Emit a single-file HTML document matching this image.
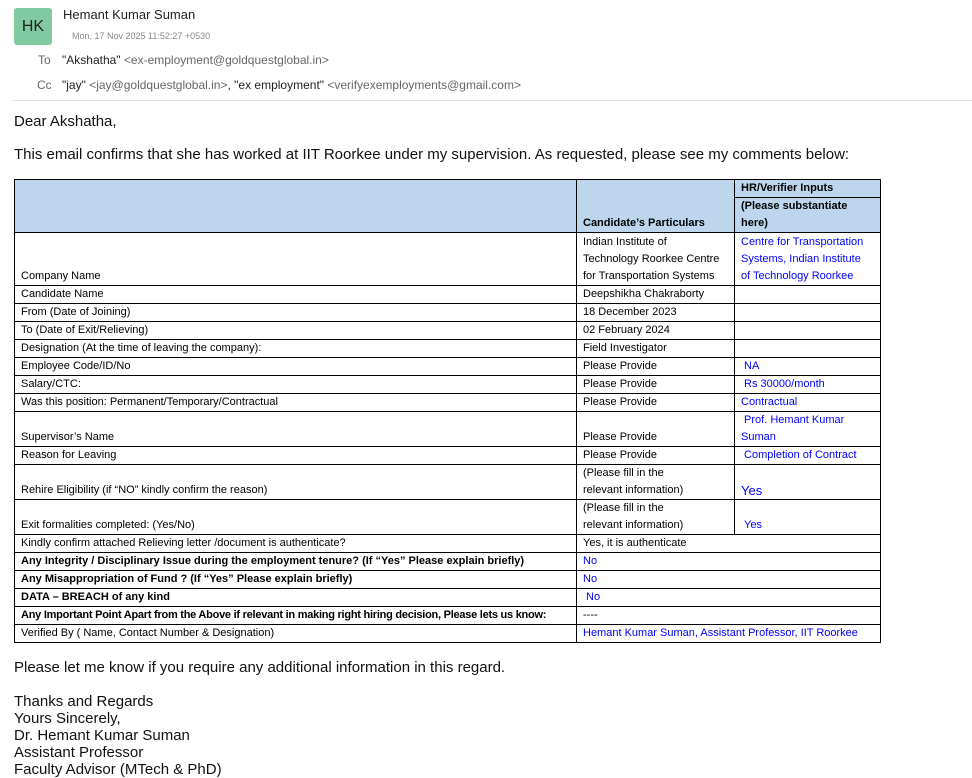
<!DOCTYPE html>
<html><head><meta charset="utf-8"><style>
body{margin:0;width:972px;height:777px;overflow:hidden;background:#fff;font-family:"Liberation Sans",sans-serif;color:#222;position:relative}
.a{position:absolute;white-space:nowrap}
.av{position:absolute;left:14px;top:8px;width:38px;height:37px;background:#80c9a1;border-radius:3px;font-size:16px;color:#222;text-align:center;line-height:37px}
table{position:absolute;left:14px;top:179px;width:866px;border-collapse:collapse;table-layout:fixed;font-size:11px;color:#000}
td{border:1px solid #000;padding:0 6px;vertical-align:bottom;line-height:17px;white-space:nowrap;overflow:hidden}
.h{background:#bdd6ee;font-weight:bold}
.b{color:#00f}
.bo{font-weight:bold}
.p{font-size:15px;color:#111}
</style></head><body>
<div class="av">HK</div>
<div class="a" style="left:63px;top:7px;font-size:13px;color:#222">Hemant Kumar Suman</div>
<div class="a" style="left:72px;top:31px;font-size:9px;color:#888">Mon, 17 Nov 2025 11:52:27 +0530</div>
<div class="a" style="left:38px;top:53px;font-size:12px;color:#666">To</div>
<div class="a" style="left:62px;top:53px;font-size:12px;color:#222">"Akshatha" <span style="color:#666">&lt;ex-employment@goldquestglobal.in&gt;</span></div>
<div class="a" style="left:37px;top:78px;font-size:12px;color:#666">Cc</div>
<div class="a" style="left:62px;top:78px;font-size:12px;color:#222">"jay" <span style="color:#666">&lt;jay@goldquestglobal.in&gt;</span>, "ex employment" <span style="color:#666">&lt;verifyexemployments@gmail.com&gt;</span></div>
<div class="a" style="left:13px;top:100px;width:959px;height:1px;background:#e4e4e4"></div>
<div class="a p" style="left:14px;top:113px">Dear Akshatha,</div>
<div class="a p" style="left:14px;top:146px">This email confirms that she has worked at IIT Roorkee under my supervision. As requested, please see my comments below:</div>
<table>
<colgroup><col style="width:562px"><col style="width:158px"><col style="width:146px"></colgroup>
<tr style="height:18px"><td class="h" rowspan="2"></td><td class="h" rowspan="2">Candidate’s Particulars</td><td class="h">HR/Verifier Inputs</td></tr>
<tr style="height:35px"><td class="h">(Please substantiate<br>here)</td></tr>
<tr style="height:53px"><td>Company Name</td><td>Indian Institute of<br>Technology Roorkee Centre<br>for Transportation Systems</td><td class="b">Centre for Transportation<br>Systems, Indian Institute<br>of Technology Roorkee</td></tr>
<tr style="height:18px"><td>Candidate Name</td><td>Deepshikha Chakraborty</td><td></td></tr>
<tr style="height:18px"><td>From (Date of Joining)</td><td>18 December 2023</td><td></td></tr>
<tr style="height:18px"><td>To (Date of Exit/Relieving)</td><td>02 February 2024</td><td></td></tr>
<tr style="height:18px"><td>Designation (At the time of leaving the company):</td><td>Field Investigator</td><td></td></tr>
<tr style="height:18px"><td>Employee Code/ID/No</td><td>Please Provide</td><td class="b">&nbsp;NA</td></tr>
<tr style="height:18px"><td>Salary/CTC:</td><td>Please Provide</td><td class="b">&nbsp;Rs 30000/month</td></tr>
<tr style="height:18px"><td>Was this position: Permanent/Temporary/Contractual</td><td>Please Provide</td><td class="b">Contractual</td></tr>
<tr style="height:35px"><td>Supervisor’s Name</td><td>Please Provide</td><td class="b">&nbsp;Prof. Hemant Kumar<br>Suman</td></tr>
<tr style="height:18px"><td>Reason for Leaving</td><td>Please Provide</td><td class="b">&nbsp;Completion of Contract</td></tr>
<tr style="height:35px"><td>Rehire Eligibility (if “NO” kindly confirm the reason)</td><td>(Please fill in the<br>relevant information)</td><td class="b" style="font-size:13px">Yes</td></tr>
<tr style="height:35px"><td>Exit formalities completed: (Yes/No)</td><td>(Please fill in the<br>relevant information)</td><td class="b">&nbsp;Yes</td></tr>
<tr style="height:18px"><td>Kindly confirm attached Relieving letter /document is authenticate?</td><td colspan="2">Yes, it is authenticate</td></tr>
<tr style="height:18px"><td class="bo">Any Integrity / Disciplinary Issue during the employment tenure? (If “Yes” Please explain briefly)</td><td colspan="2" class="b">No</td></tr>
<tr style="height:18px"><td class="bo">Any Misappropriation of Fund ? (If “Yes” Please explain briefly)</td><td colspan="2" class="b">No</td></tr>
<tr style="height:18px"><td class="bo">DATA – BREACH of any kind</td><td colspan="2" class="b">&nbsp;No</td></tr>
<tr style="height:18px"><td class="bo" style="letter-spacing:-0.25px">Any Important Point Apart from the Above if relevant in making right hiring decision, Please lets us know:</td><td colspan="2">----</td></tr>
<tr style="height:18px"><td>Verified By ( Name, Contact Number &amp; Designation)</td><td colspan="2" class="b">Hemant Kumar Suman, Assistant Professor, IIT Roorkee</td></tr>
</table>
<div class="a p" style="left:14px;top:659px">Please let me know if you require any additional information in this regard.</div>
<div class="a p" style="left:14px;top:693px;line-height:17px">Thanks and Regards<br>Yours Sincerely,<br>Dr. Hemant Kumar Suman<br>Assistant Professor<br>Faculty Advisor (MTech &amp; PhD)</div>
</body></html>
